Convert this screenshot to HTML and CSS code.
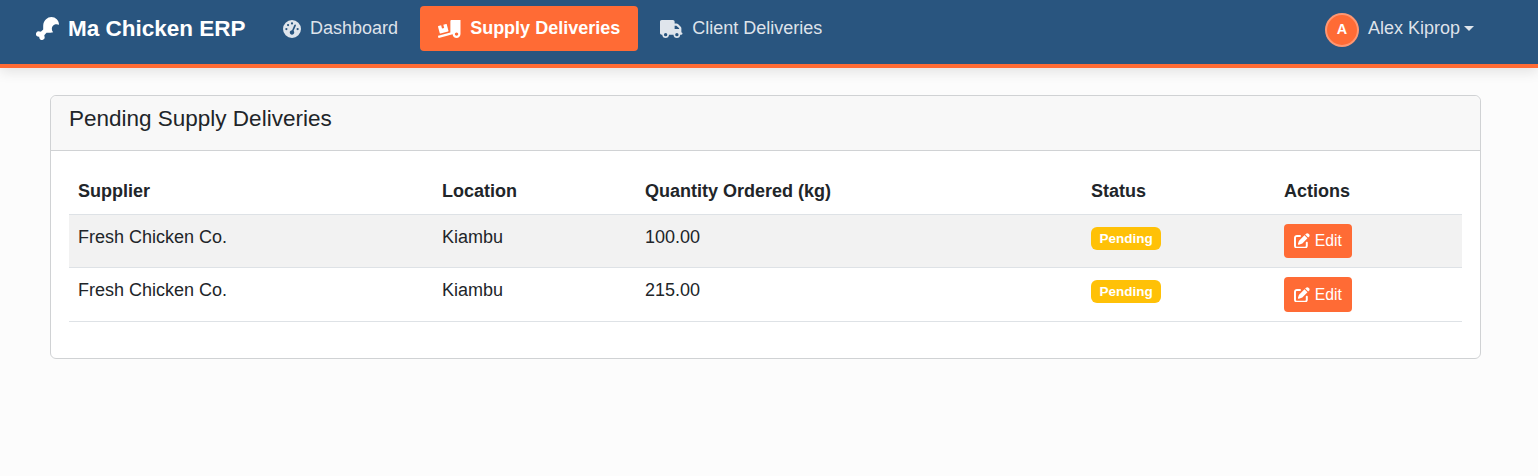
FILE: index.html
```html
<!DOCTYPE html>
<html lang="en">
<head>
  <meta charset="UTF-8" />
  <meta name="viewport" content="width=device-width, initial-scale=1.0"/>
  <title>Supply Deliveries - Ma Chicken ERP</title>
  <link rel="stylesheet" href="styles.css">
</head>
<body>
  <nav class="navbar">
    <a class="brand" href="#">
      <svg class="brand-icon" viewBox="0 0 512 512"><path d="M462.8 49.57a169.44 169.44 0 0 0-239.5 0C187.82 85 160.13 128 160.13 192v85.83l-40.62 40.59c-9.7 9.69-24 11.07-36.78 6a60.33 60.33 0 0 0-65 98.72C33 438.39 54.24 442.7 73.85 438.21c-4.5 19.6-.18 40.83 15.1 56.1a60.35 60.35 0 0 0 98.8-65c-5.09-12.73-3.72-27 6-36.75L234.36 352h85.89a187.87 187.87 0 0 0 61.89-10c-39.64-43.89-39.83-110.23 1.05-151.07 34.38-34.36 86.76-39.46 128.74-16.8 1.3-44.96-14.81-90.28-49.13-124.56z"/></svg>
      Ma Chicken ERP
    </a>
    <ul class="nav-links">
      <li><a class="nav-link" href="#">
        <svg class="nav-icon" viewBox="0 0 512 512"><path d="M0 256a256 256 0 1 1 512 0A256 256 0 1 1 0 256zM288 96a32 32 0 1 0 -64 0 32 32 0 1 0 64 0zM256 416c35.3 0 64-28.7 64-64c0-17.4-6.9-33.1-18.1-44.6L366 161.7c5.3-12.1-.2-26.3-12.3-31.6s-26.3 .2-31.6 12.3L257.9 288c-.6 0-1.3 0-1.9 0c-35.3 0-64 28.7-64 64s28.7 64 64 64zM176 144a32 32 0 1 0 -64 0 32 32 0 1 0 64 0zM96 288a32 32 0 1 0 0-64 32 32 0 1 0 0 64zm352-32a32 32 0 1 0 -64 0 32 32 0 1 0 64 0z"/></svg>
        Dashboard
      </a></li>
      <li><a class="nav-link active" href="#">
        <svg class="nav-icon wide" viewBox="0 0 640 512"><path d="M50.2 375.6c2.3 8.5 11.1 13.6 19.6 11.3l216.4-58c8.5-2.3 13.6-11.1 11.3-19.6l-49.7-185.5c-2.3-8.5-11.1-13.6-19.6-11.3L151 133.3l24.8 92.7-61.8 16.5-24.8-92.7-77.3 20.7C3.4 172.8-1.7 181.6.6 190.1l49.6 185.5zM384 0c-17.7 0-32 14.3-32 32v323.6L5.9 450c-4.3 1.2-6.8 5.6-5.6 9.8l12.6 46.3c1.2 4.3 5.6 6.8 9.8 5.6l393.7-107.4C418.8 464.1 467.6 512 528 512c61.9 0 112-50.1 112-112V0H384zm144 448c-26.5 0-48-21.5-48-48s21.5-48 48-48 48 21.5 48 48-21.5 48-48 48z"/></svg>
        Supply Deliveries
      </a></li>
      <li><a class="nav-link" href="#">
        <svg class="nav-icon wide" viewBox="0 0 640 512"><path d="M48 0C21.5 0 0 21.5 0 48V368c0 26.5 21.5 48 48 48H64c0 53 43 96 96 96s96-43 96-96H384c0 53 43 96 96 96s96-43 96-96h32c17.7 0 32-14.3 32-32s-14.3-32-32-32V288 256 237.3c0-17-6.7-33.3-18.7-45.3L512 114.7c-12-12-28.3-18.7-45.3-18.7H416V48c0-26.5-21.5-48-48-48H48zM416 160h50.7L544 237.3V256H416V160zM112 416a48 48 0 1 1 96 0 48 48 0 1 1 -96 0zm368-48a48 48 0 1 1 0 96 48 48 0 1 1 0-96z"/></svg>
        Client Deliveries
      </a></li>
    </ul>
    <a class="user-menu" href="#">
      <span class="avatar">A</span>
      Alex Kiprop
      <span class="caret"></span>
    </a>
  </nav>

  <main class="content">
    <div class="card">
      <div class="card-header">
        <h5>Pending Supply Deliveries</h5>
      </div>
      <div class="card-body">
        <table class="deliveries">
          <thead>
            <tr>
              <th class="col-supplier">Supplier</th>
              <th class="col-location">Location</th>
              <th class="col-quantity">Quantity Ordered (kg)</th>
              <th class="col-status">Status</th>
              <th>Actions</th>
            </tr>
          </thead>
          <tbody>
            <tr>
              <td>Fresh Chicken Co.</td>
              <td>Kiambu</td>
              <td>100.00</td>
              <td><span class="badge">Pending</span></td>
              <td><a class="btn-edit" href="#">
                <svg class="edit-icon" viewBox="0 0 512 512"><path d="M471.6 21.7c-21.9-21.9-57.3-21.9-79.2 0L362.3 51.7l97.9 97.9 30.1-30.1c21.9-21.9 21.9-57.3 0-79.2L471.6 21.7zm-299.2 220c-6.1 6.1-10.8 13.6-13.5 21.9l-29.6 88.8c-2.9 8.6-.6 18.1 5.8 24.6s15.9 8.7 24.6 5.8l88.8-29.6c8.2-2.7 15.7-7.4 21.9-13.5L437.7 172.3 339.7 74.3 172.4 241.7zM96 64C43 64 0 107 0 160V416c0 53 43 96 96 96H352c53 0 96-43 96-96V320c0-17.7-14.3-32-32-32s-32 14.3-32 32v96c0 17.7-14.3 32-32 32H96c-17.7 0-32-14.3-32-32V160c0-17.7 14.3-32 32-32h96c17.7 0 32-14.3 32-32s-14.3-32-32-32H96z"/></svg>
                Edit
              </a></td>
            </tr>
            <tr>
              <td>Fresh Chicken Co.</td>
              <td>Kiambu</td>
              <td>215.00</td>
              <td><span class="badge">Pending</span></td>
              <td><a class="btn-edit" href="#">
                <svg class="edit-icon" viewBox="0 0 512 512"><path d="M471.6 21.7c-21.9-21.9-57.3-21.9-79.2 0L362.3 51.7l97.9 97.9 30.1-30.1c21.9-21.9 21.9-57.3 0-79.2L471.6 21.7zm-299.2 220c-6.1 6.1-10.8 13.6-13.5 21.9l-29.6 88.8c-2.9 8.6-.6 18.1 5.8 24.6s15.9 8.7 24.6 5.8l88.8-29.6c8.2-2.7 15.7-7.4 21.9-13.5L437.7 172.3 339.7 74.3 172.4 241.7zM96 64C43 64 0 107 0 160V416c0 53 43 96 96 96H352c53 0 96-43 96-96V320c0-17.7-14.3-32-32-32s-32 14.3-32 32v96c0 17.7-14.3 32-32 32H96c-17.7 0-32-14.3-32-32V160c0-17.7 14.3-32 32-32h96c17.7 0 32-14.3 32-32s-14.3-32-32-32H96z"/></svg>
                Edit
              </a></td>
            </tr>
          </tbody>
        </table>
      </div>
    </div>
  </main>
</body>
</html>
```

FILE: styles.css
```css
* {
  box-sizing: border-box;
}
body {
  margin: 0;
  font-family: "Liberation Sans", Arial, sans-serif;
  font-size: 18px;
  line-height: 1.5;
  background: #fcfcfc;
  color: #212529;
}
a {
  text-decoration: none;
}

/* navbar */
.navbar {
  display: flex;
  align-items: center;
  height: 68px;
  padding: 0 64px 7px 36px;
  background: #29557f;
  border-bottom: 4px solid #ff6b35;
  box-shadow: 0 4px 12px rgba(0, 0, 0, 0.1);
}
.brand {
  display: flex;
  align-items: center;
  gap: 9px;
  margin-right: 19px;
  color: #fff;
  font-size: 22.5px;
  font-weight: 700;
}
.brand-icon {
  width: 23px;
  height: 23px;
  fill: #fff;
}
.nav-links {
  display: flex;
  gap: 4px;
  margin: 0;
  padding: 0;
  list-style: none;
}
.nav-link {
  display: flex;
  align-items: center;
  gap: 9.5px;
  height: 45px;
  padding: 0 18px;
  border-radius: 4px;
  color: rgba(255, 255, 255, 0.85);
}
.nav-link.active {
  background: #ff6b35;
  color: #fff;
  font-weight: 700;
}
.nav-icon {
  width: 18px;
  height: 18px;
  fill: currentColor;
}
.nav-icon.wide {
  width: 22.5px;
}
.user-menu {
  display: flex;
  align-items: center;
  margin-left: auto;
  color: rgba(255, 255, 255, 0.85);
}
.avatar {
  display: flex;
  align-items: center;
  justify-content: center;
  width: 34px;
  height: 34px;
  margin: 2px 9px 0 0;
  border: 2px solid rgba(255, 255, 255, 0.3);
  border-radius: 50%;
  background: #ff6b35;
  color: #fff;
  font-size: 14.4px;
  font-weight: 700;
}
.caret {
  width: 0;
  height: 0;
  margin-left: 4px;
  border-top: 5px solid;
  border-left: 5px solid transparent;
  border-right: 5px solid transparent;
}

/* card */
.content {
  padding: 27px 57px 0 50px;
}
.card {
  background: #fff;
  border: 1px solid #d0d2d4;
  border-radius: 6px;
}
.card-header {
  height: 55px;
  padding: 0 18px;
  background: #f8f8f8;
  border-bottom: 1px solid #d0d2d4;
  border-radius: 6px 6px 0 0;
}
.card-header h5 {
  margin: 0;
  font-size: 22.5px;
  font-weight: 400;
  line-height: 45px;
}
.card-body {
  padding: 18px 18px 36px;
}

/* table */
.deliveries {
  width: 100%;
  border-collapse: collapse;
}
.deliveries th,
.deliveries td {
  padding: 9px;
  text-align: left;
  vertical-align: top;
}
.deliveries th {
  height: 45px;
  border-bottom: 1px solid #dee2e6;
}
.deliveries td {
  height: 53px;
  border-bottom: 1px solid #dee2e6;
}
.deliveries tbody tr:nth-child(even) td {
  height: 54px;
}
.deliveries tbody tr:nth-child(odd) {
  background: #f2f2f2;
}
.col-supplier {
  width: 364px;
}
.col-location {
  width: 203px;
}
.col-quantity {
  width: 446px;
}
.col-status {
  width: 193px;
}
.badge {
  display: inline-block;
  margin-top: 3px;
  padding: 0 8.4px;
  border-radius: 6px;
  background: #ffc107;
  color: #fff;
  font-size: 13.5px;
  font-weight: 700;
  line-height: 23px;
}
.btn-edit {
  display: inline-flex;
  align-items: center;
  gap: 5px;
  height: 34px;
  padding: 0 10px 1px;
  border-radius: 4px;
  background: #ff6b35;
  color: #fff;
  font-size: 15.75px;
}
.deliveries tbody tr:nth-child(even) .btn-edit {
  height: 35px;
  padding-bottom: 0;
}
.edit-icon {
  width: 15.75px;
  height: 15.75px;
  fill: currentColor;
}
```
